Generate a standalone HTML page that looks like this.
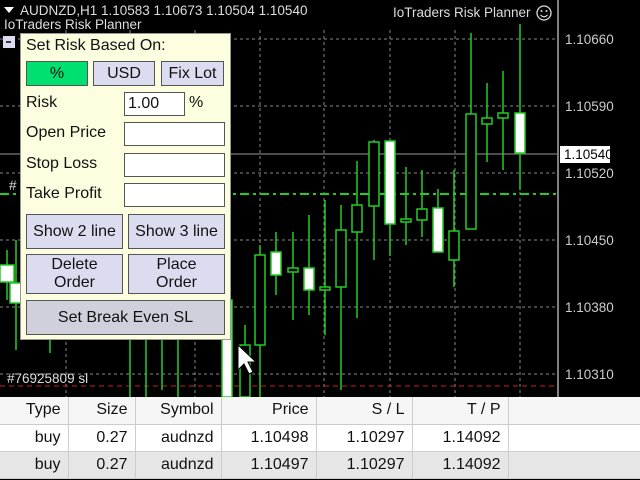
<!DOCTYPE html>
<html><head><style>
*{margin:0;padding:0;box-sizing:border-box}
body{width:640px;height:480px;background:#000;position:relative;overflow:hidden;font-family:"Liberation Sans",sans-serif}
.p{position:absolute}
.lbl{position:absolute;font-size:16px;color:#111}
.btn{position:absolute;background:#dcdcf0;border:1px solid #555;font-size:16px;color:#111;text-align:center;line-height:18px;display:flex;align-items:center;justify-content:center;white-space:nowrap}
.inp{position:absolute;background:#fff;border:1px solid #555;font-size:16px;color:#111;padding-left:3px;line-height:22px}
table{position:absolute;left:0;top:397px;width:640px;border-collapse:collapse;font-size:16px;color:#111}
td{text-align:right;padding-right:7px;border-right:1px solid #ccc;border-bottom:1px solid #ccc;height:27px}
</style></head><body>
<svg class="p" style="left:0;top:0" width="640" height="400">
<g stroke="#888" stroke-dasharray="3,3" stroke-width="1">
<line x1="0" y1="39" x2="557" y2="39"/><line x1="0" y1="106" x2="557" y2="106"/><line x1="0" y1="173" x2="557" y2="173"/><line x1="0" y1="240" x2="557" y2="240"/><line x1="0" y1="307" x2="557" y2="307"/><line x1="0" y1="374" x2="557" y2="374"/>
<line x1="66" y1="30" x2="66" y2="397"/><line x1="130" y1="30" x2="130" y2="397"/><line x1="195" y1="30" x2="195" y2="397"/><line x1="260" y1="30" x2="260" y2="397"/><line x1="324" y1="30" x2="324" y2="397"/><line x1="390" y1="30" x2="390" y2="397"/><line x1="455" y1="30" x2="455" y2="397"/><line x1="520" y1="30" x2="520" y2="397"/>
</g>
<line x1="0" y1="154" x2="557" y2="154" stroke="#999"/>
<line x1="0" y1="194" x2="557" y2="194" stroke="#2c2" stroke-width="2" stroke-dasharray="9,4,3,4"/>
<line x1="0" y1="386" x2="557" y2="386" stroke="#c22" stroke-dasharray="5,4"/>
<line x1="558" y1="0" x2="558" y2="397" stroke="#fff"/>
<g stroke="#2c2" stroke-width="1.5" fill="none">
<line x1="7" y1="250" x2="7" y2="300"/><rect x="0" y="265" width="14" height="17" fill="#fff"/>
<line x1="16" y1="240" x2="16" y2="350"/><rect x="10" y="283" width="12" height="20" fill="#fff"/>
<line x1="50" y1="242" x2="50" y2="353"/><rect x="44" y="283" width="12" height="24" fill="#fff"/>
<line x1="130" y1="320" x2="130" y2="397"/><line x1="146" y1="320" x2="146" y2="397"/><line x1="162" y1="320" x2="162" y2="390"/><line x1="178" y1="320" x2="178" y2="397"/>
<line x1="226" y1="300" x2="226" y2="397"/><rect x="222" y="300" width="10" height="97" fill="#fff"/>
<line x1="245" y1="325" x2="245" y2="397"/><rect x="240" y="345" width="10" height="52" fill="#000"/>
<line x1="260" y1="245" x2="260" y2="397"/><rect x="255" y="255" width="10" height="90" fill="#000"/>
<line x1="276" y1="232" x2="276" y2="295"/><rect x="271" y="252" width="10" height="23" fill="#fff"/>
<line x1="293" y1="232" x2="293" y2="320"/><rect x="288" y="268" width="10" height="4" fill="#000"/>
<line x1="309" y1="215" x2="309" y2="315"/><rect x="304" y="268" width="10" height="22" fill="#fff"/>
<line x1="325" y1="200" x2="325" y2="335"/><rect x="320" y="287" width="10" height="3" fill="#000"/>
<line x1="341" y1="205" x2="341" y2="390"/><rect x="336" y="230" width="10" height="57" fill="#000"/>
<line x1="357" y1="161" x2="357" y2="318"/><rect x="352" y="205" width="10" height="27" fill="#000"/>
<line x1="374" y1="140" x2="374" y2="260"/><rect x="369" y="142" width="10" height="64" fill="#000"/>
<line x1="390" y1="141" x2="390" y2="256"/><rect x="385" y="141" width="10" height="83" fill="#fff"/>
<line x1="406" y1="167" x2="406" y2="245"/><rect x="401" y="219" width="10" height="3" fill="#000"/>
<line x1="422" y1="170" x2="422" y2="237"/><rect x="417" y="209" width="10" height="11" fill="#000"/>
<line x1="438" y1="189" x2="438" y2="252"/><rect x="433" y="208" width="10" height="44" fill="#fff"/>
<line x1="454" y1="170" x2="454" y2="287"/><rect x="449" y="231" width="10" height="29" fill="#000"/>
<line x1="471" y1="33" x2="471" y2="229"/><rect x="466" y="114" width="10" height="115" fill="#000"/>
<line x1="487" y1="83" x2="487" y2="162"/><rect x="482" y="118" width="10" height="6" fill="#000"/>
<line x1="503" y1="71" x2="503" y2="170"/><rect x="498" y="113" width="10" height="5" fill="#000"/>
<line x1="520" y1="24" x2="520" y2="190"/><rect x="515" y="113" width="10" height="40" fill="#fff"/>
</g>
<path d="M238 345 L238 370 L244 364 L249 374 L253 372 L248 362 L256 362 Z" fill="#fff" stroke="#000"/>
<g fill="#ccc" font-size="13.5" font-family="Liberation Sans">
<text x="565" y="44">1.10660</text><text x="565" y="111">1.10590</text><text x="565" y="178">1.10520</text><text x="565" y="245">1.10450</text><text x="565" y="312">1.10380</text><text x="565" y="379">1.10310</text>
</g>
<rect x="560" y="146" width="43" height="17" fill="#fff"/>
<text x="564" y="159" font-size="13.5" fill="#000" font-family="Liberation Sans">1.10540</text>
<polygon points="4,7 14,7 9,13" fill="#fff"/>
<g fill="#ddd" font-size="13.5" font-family="Liberation Sans">
<text x="20" y="15">AUDNZD,H1  1.10583 1.10673 1.10504 1.10540</text>
<text x="4" y="29">IoTraders Risk Planner</text>
<text x="393" y="17">IoTraders Risk Planner</text>
<text x="7" y="383">#76925809 sl</text>
<text x="9" y="190">#</text>
</g>
<circle cx="544" cy="13" r="7" fill="none" stroke="#ddd" stroke-width="1.3"/>
<circle cx="541.5" cy="11" r="1" fill="#ddd"/><circle cx="546.5" cy="11" r="1" fill="#ddd"/>
<path d="M540.5 15 Q544 18.5 547.5 15" stroke="#ddd" fill="none" stroke-width="1.2"/>
<rect x="3" y="36" width="12" height="12" fill="#dcdcf0"/><line x1="6" y1="42" x2="11" y2="42" stroke="#000" stroke-width="1.5"/>
</svg>
<div class="p" style="left:20px;top:33px;width:211px;height:307px;background:#fdfde0;border:1px solid #999"></div>
<div class="lbl" style="left:26px;top:37px">Set Risk Based On:</div>
<div class="btn" style="left:26px;top:61px;width:62px;height:25px;background:#00e070">%</div>
<div class="btn" style="left:93px;top:61px;width:62px;height:25px">USD</div>
<div class="btn" style="left:161px;top:61px;width:63px;height:25px">Fix Lot</div>
<div class="lbl" style="left:26px;top:94px">Risk</div>
<div class="inp" style="left:124px;top:92px;width:61px;height:24px">1.00</div>
<div class="lbl" style="left:189px;top:94px">%</div>
<div class="lbl" style="left:26px;top:124px">Open Price</div>
<div class="inp" style="left:124px;top:122px;width:101px;height:24px"></div>
<div class="lbl" style="left:26px;top:155px">Stop Loss</div>
<div class="inp" style="left:124px;top:153px;width:101px;height:24px"></div>
<div class="lbl" style="left:26px;top:185px">Take Profit</div>
<div class="inp" style="left:124px;top:183px;width:101px;height:24px"></div>
<div class="btn" style="left:26px;top:214px;width:97px;height:35px">Show 2 line</div>
<div class="btn" style="left:128px;top:214px;width:97px;height:35px">Show 3 line</div>
<div class="btn" style="left:26px;top:254px;width:97px;height:40px">Delete<br>Order</div>
<div class="btn" style="left:128px;top:254px;width:97px;height:40px">Place<br>Order</div>
<div class="btn" style="left:26px;top:300px;width:199px;height:35px;background:#d0d0dc">Set Break Even SL</div>
<div class="p" style="left:560px;top:146px;width:50px;height:17px;background:#fff;color:#000;font-size:13.5px;line-height:17px;padding-left:4px">1.10540</div>
<table style="background:#fff">
<tr style="background:#f6f6f6"><td style="width:68px">Type</td><td style="width:67px">Size</td><td style="width:86px">Symbol</td><td style="width:95px">Price</td><td style="width:96px">S / L</td><td style="width:96px">T / P</td><td style="border-right:none"></td></tr>
<tr><td>buy</td><td>0.27</td><td>audnzd</td><td>1.10498</td><td>1.10297</td><td>1.14092</td><td style="border-right:none"></td></tr>
<tr style="background:#e6e6e6"><td>buy</td><td>0.27</td><td>audnzd</td><td>1.10497</td><td>1.10297</td><td>1.14092</td><td style="border-right:none"></td></tr>
</table>
</body></html>
